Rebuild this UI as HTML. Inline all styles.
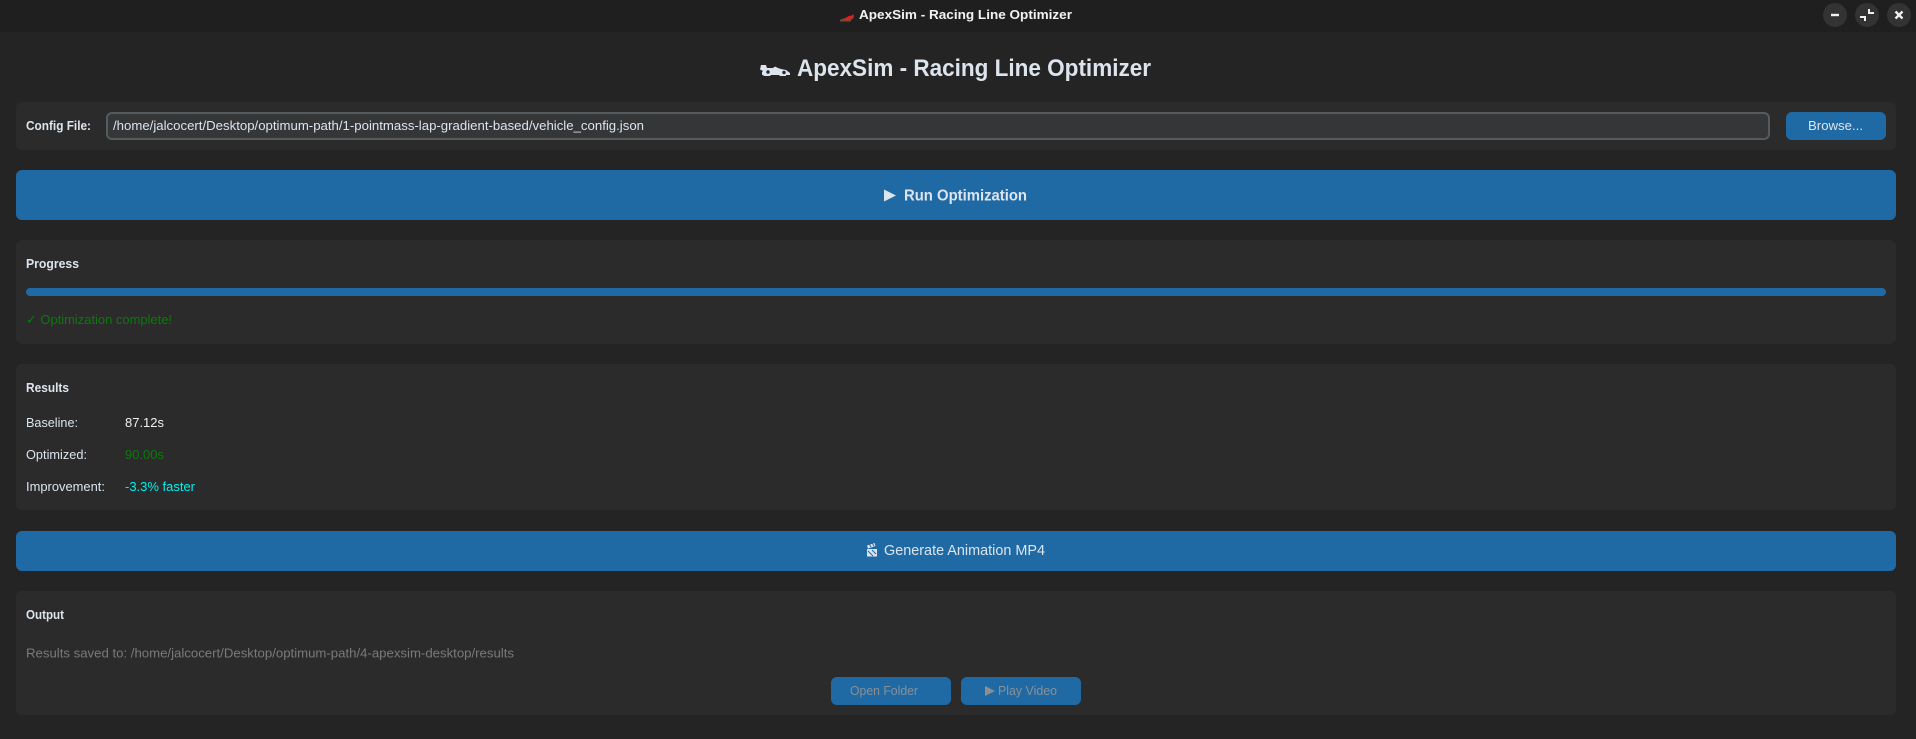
<!DOCTYPE html>
<html lang="en">
<head>
<meta charset="utf-8">
<title>ApexSim - Racing Line Optimizer</title>
<style>
html,body{margin:0;padding:0;background:#242424;width:1916px;height:739px;overflow:hidden}
svg{display:block}
text{font-family:"Liberation Sans",sans-serif;font-size:13px;fill:#dce4ee;white-space:pre}
.b{font-weight:bold}
.p{fill:#2b2b2b}
.btn{fill:#1f6aa5}
.tb{fill:#333333}
</style>
</head>
<body>
<svg width="1916" height="739" viewBox="0 0 1916 739" xmlns="http://www.w3.org/2000/svg">
  <rect width="1916" height="739" fill="#242424"/>
  <!-- title bar -->
  <rect width="1916" height="32" fill="#1f1f1f"/>
  <path d="M840 21.500v-1.500l3-1.500 4-1 3-1.500 2 .5 2-2-.5 4-2 1-1 2z" fill="#7a4a34"/>
  <path d="M846 17.500l4-2 1 .5 2-2-.5 3.500-1.500 1-1 1.500-4 .5z" fill="#e02020"/>
  <text x="859" y="19" class="b" style="fill:#f2f2f2" textLength="213" lengthAdjust="spacingAndGlyphs">ApexSim - Racing Line Optimizer</text>
  <circle cx="1835" cy="15" r="12" class="tb"/>
  <circle cx="1867" cy="15" r="12" class="tb"/>
  <circle cx="1899" cy="15" r="12" class="tb"/>
  <rect x="1831" y="13.800" width="8" height="2.400" fill="#f0f0f0"/>
  <path d="M1869 9v4h5M1865 21v-4h-5" fill="none" stroke="#f0f0f0" stroke-width="2"/>
  <path d="M1895.500 11.500l7 7M1902.500 11.500l-7 7" stroke="#f0f0f0" stroke-width="2.300"/>

  <!-- heading -->
  <path d="M761 65h5l1 3h6l2-1.500 3 1.500 3 1 5 1 4 3v2h-4v1h-6l-1-1h-8l-1 1h-6l-1-1h-1v-3l1-1-3-1.500z" fill="#dce4ee"/>
  <circle cx="768" cy="72" r="1.700" fill="#242424"/>
  <circle cx="784" cy="72.500" r="1.700" fill="#242424"/>
  <text x="797" y="76" class="b" style="font-size:24px" textLength="354" lengthAdjust="spacingAndGlyphs">ApexSim - Racing Line Optimizer</text>

  <!-- config panel -->
  <rect x="16" y="102" width="1880" height="48" rx="6" class="p"/>
  <text x="26" y="130" class="b" textLength="65" lengthAdjust="spacingAndGlyphs">Config File:</text>
  <rect x="107" y="113" width="1662" height="26" rx="5" fill="#343638" stroke="#565b5e" stroke-width="2"/>
  <text x="113" y="130" textLength="531" lengthAdjust="spacingAndGlyphs">/home/jalcocert/Desktop/optimum-path/1-pointmass-lap-gradient-based/vehicle_config.json</text>
  <rect x="1786" y="112" width="100" height="28" rx="6" class="btn"/>
  <text x="1808" y="130" textLength="55" lengthAdjust="spacingAndGlyphs">Browse...</text>

  <!-- run -->
  <rect x="16" y="170" width="1880" height="50" rx="6" class="btn"/>
  <path d="M884 189.500l12 6-12 6z" fill="#dce4ee"/>
  <text x="904" y="200.500" class="b" style="font-size:16px" textLength="123" lengthAdjust="spacingAndGlyphs">Run Optimization</text>

  <!-- progress -->
  <rect x="16" y="240" width="1880" height="104" rx="6" class="p"/>
  <text x="26" y="268" class="b" textLength="53" lengthAdjust="spacingAndGlyphs">Progress</text>
  <rect x="26" y="288" width="1860" height="8" rx="4" class="btn"/>
  <text x="26" y="324" style="fill:#0a7a0a" textLength="146" lengthAdjust="spacingAndGlyphs"><tspan style="font-family:'DejaVu Sans',sans-serif">✓</tspan> Optimization complete!</text>

  <!-- results -->
  <rect x="16" y="364" width="1880" height="146" rx="6" class="p"/>
  <text x="26" y="392" class="b" textLength="43" lengthAdjust="spacingAndGlyphs">Results</text>
  <text x="26" y="427" textLength="52" lengthAdjust="spacingAndGlyphs">Baseline:</text>
  <text x="125" y="427" style="fill:#f0f0f0" textLength="39" lengthAdjust="spacingAndGlyphs">87.12s</text>
  <text x="26" y="459" textLength="61" lengthAdjust="spacingAndGlyphs">Optimized:</text>
  <text x="125" y="459" style="fill:#0a7a0a" textLength="39" lengthAdjust="spacingAndGlyphs">90.00s</text>
  <text x="26" y="491" textLength="79" lengthAdjust="spacingAndGlyphs">Improvement:</text>
  <text x="125" y="491" style="fill:#00f0f0" textLength="70" lengthAdjust="spacingAndGlyphs">-3.3% faster</text>

  <!-- animation -->
  <rect x="16" y="531" width="1880" height="40" rx="6" class="btn"/>
  <path d="M867 545.500l7.500-2.500 1 3-7.500 2.500zM867 549h10v7.500h-10z" fill="#dce4ee"/>
  <path d="M869.500 544.500l1.500 2.500M872.500 543.500l1.500 2.500M868 551l5 5M872 550l4 4" stroke="#1f6aa5" stroke-width="1" fill="none"/>
  <text x="884" y="555" style="font-size:15px" textLength="161" lengthAdjust="spacingAndGlyphs">Generate Animation MP4</text>

  <!-- output -->
  <rect x="16" y="591" width="1880" height="124" rx="6" class="p"/>
  <text x="26" y="619" class="b" textLength="38" lengthAdjust="spacingAndGlyphs">Output</text>
  <text x="26" y="657.500" style="fill:#7a7a7a" textLength="488" lengthAdjust="spacingAndGlyphs">Results saved to: /home/jalcocert/Desktop/optimum-path/4-apexsim-desktop/results</text>
  <rect x="831" y="677" width="120" height="28" rx="6" class="btn"/>
  <text x="850" y="695" style="fill:#8a8f94" textLength="68" lengthAdjust="spacingAndGlyphs">Open Folder</text>
  <rect x="961" y="677" width="120" height="28" rx="6" class="btn"/>
  <path d="M985 686l10 5-10 5z" fill="#8a8f94"/>
  <text x="998" y="695" style="fill:#8a8f94" textLength="59" lengthAdjust="spacingAndGlyphs">Play Video</text>
</svg>
</body>
</html>
